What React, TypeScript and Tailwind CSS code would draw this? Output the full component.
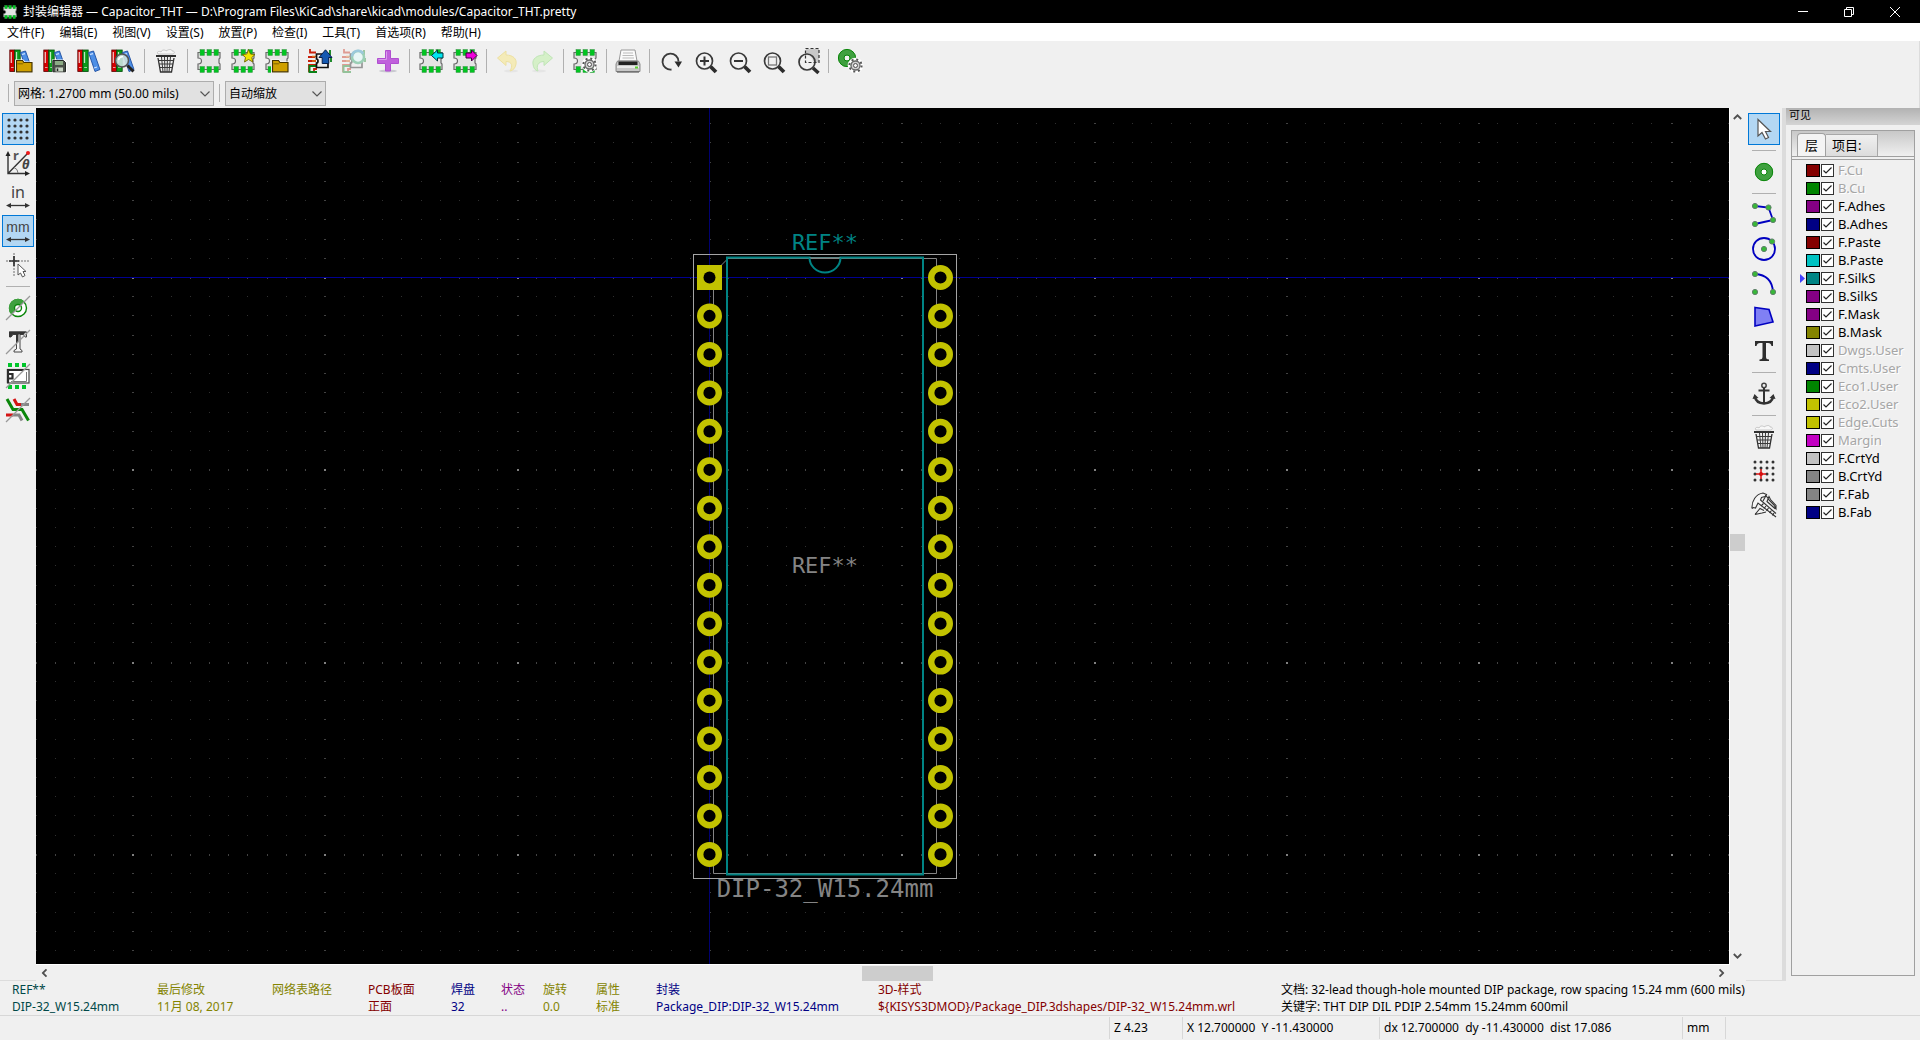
import React from 'react';
import { clsx } from 'clsx';

const MENUS = ['文件(F)', '编辑(E)', '视图(V)', '设置(S)', '放置(P)', '检查(I)', '工具(T)', '首选项(R)', '帮助(H)'];

const LAYERS = [
  { name: 'F.Cu', color: 'bg-[#840000]', disabled: true },
  { name: 'B.Cu', color: 'bg-[#008400]', disabled: true },
  { name: 'F.Adhes', color: 'bg-[#840084]' },
  { name: 'B.Adhes', color: 'bg-[#000084]' },
  { name: 'F.Paste', color: 'bg-[#840000]' },
  { name: 'B.Paste', color: 'bg-[#00c2c2]' },
  { name: 'F.SilkS', color: 'bg-[#008484]', active: true },
  { name: 'B.SilkS', color: 'bg-[#840084]' },
  { name: 'F.Mask', color: 'bg-[#840084]' },
  { name: 'B.Mask', color: 'bg-[#848400]' },
  { name: 'Dwgs.User', color: 'bg-[#c2c2c2]', disabled: true },
  { name: 'Cmts.User', color: 'bg-[#000084]', disabled: true },
  { name: 'Eco1.User', color: 'bg-[#008400]', disabled: true },
  { name: 'Eco2.User', color: 'bg-[#c2c200]', disabled: true },
  { name: 'Edge.Cuts', color: 'bg-[#c2c200]', disabled: true },
  { name: 'Margin', color: 'bg-[#c200c2]', disabled: true },
  { name: 'F.CrtYd', color: 'bg-[#c2c2c2]' },
  { name: 'B.CrtYd', color: 'bg-[#848484]' },
  { name: 'F.Fab', color: 'bg-[#848484]' },
  { name: 'B.Fab', color: 'bg-[#000084]' },
];

const INFO = [
  { label: 'REF**', value: 'DIP-32_W15.24mm', color: 'text-[#004848]' },
  { label: '最后修改', value: '11月 08, 2017', color: 'text-[#848400]' },
  { label: '网络表路径', value: '', color: 'text-[#848400]' },
  { label: 'PCB板面', value: '正面', color: 'text-[#840000]' },
  { label: '焊盘', value: '32', color: 'text-[#000084]' },
  { label: '状态', value: '..', color: 'text-[#840084]' },
  { label: '旋转', value: '0.0', color: 'text-[#848400]' },
  { label: '属性', value: '标准', color: 'text-[#848400]' },
  { label: '封装', value: 'Package_DIP:DIP-32_W15.24mm', color: 'text-[#000084]' },
  { label: '3D-样式', value: '${KISYS3DMOD}/Package_DIP.3dshapes/DIP-32_W15.24mm.wrl', color: 'text-[#840000]' },
  {
    label: '文档: 32-lead though-hole mounted DIP package, row spacing 15.24 mm (600 mils)',
    value: '关键字: THT DIP DIL PDIP 2.54mm 15.24mm 600mil',
    color: 'text-black',
  },
];

type Kids = { children?: React.ReactNode };

function Icon({ children }: Kids) {
  return (
    <svg width="24" height="24" viewBox="0 0 24 24" fill="none" className="overflow-visible" aria-hidden="true">
      {children}
    </svg>
  );
}

/* ---------- shared icon pieces ---------- */

function Chip() {
  return (
    <>
      <path
        d="M1 3.5H23V9L22 10V14L23 15V20.5H1V15C4 15 4.5 13.500 4.500 12S4 9 1 9Z"
        fill="#e4e4e4"
        stroke="#6a6a6a"
        strokeWidth="1.2"
      />
      {[3, 10, 17].map((x) => (
        <g key={x} fill="#00c520" stroke="#3f8f4a" strokeWidth=".5">
          <rect x={x} y=".5" width="4.500" height="6" />
          <rect x={x} y="17.500" width="4.500" height="6" />
        </g>
      ))}
    </>
  );
}

function Books() {
  return (
    <>
      <rect x=".8" y="1" width="4.700" height="21.500" fill="#d40000" stroke="#5a0000" strokeWidth=".8" />
      <rect x="5.800" y="1" width="5.400" height="21.500" fill="#0b9a1a" stroke="#004a08" strokeWidth=".8" />
      <path d="M11.500 3.500L16.500 2L23 20.500L18 22.500Z" fill="#4d8fe6" stroke="#1c4da0" strokeWidth=".9" />
      <path d="M13 5.500L16 4.600M17 19L20 18" stroke="#cfe2ff" strokeWidth="1.200" />
      <path d="M2.300 3V14M7.500 3V14" stroke="#fff" strokeOpacity=".75" strokeWidth="1.300" />
      <path d="M2 18.500H4.500M7.200 18.500H10" stroke="#fff" strokeOpacity=".6" />
    </>
  );
}

function Folder() {
  return (
    <>
      <path d="M6 10.500H14.500L16 12.500H24V24H6Z" fill="#fff" />
      <path d="M7.500 11.500H13.500L15 13.500H23V22.800H7.500Z" fill="#cfa000" stroke="#453400" strokeWidth="1.200" />
      <path d="M8.500 14.800H13.500L14.500 14" stroke="#6a5000" strokeWidth=".8" />
    </>
  );
}

function Gear({ x, y }: { x: number; y: number }) {
  return (
    <g transform={`translate(${x} ${y})`}>
      <circle r="6.300" stroke="#fff" strokeWidth="3" />
      <circle r="6.100" stroke="#555" strokeWidth="2" strokeDasharray="2 2.790" />
      <circle r="4.500" fill="#d0d0d0" stroke="#686868" strokeWidth="1.300" />
      <circle r="2" fill="#f5f5f5" stroke="#505050" />
    </g>
  );
}

function Lens({ children }: Kids) {
  return (
    <Icon>
      <path d="M17.500 17.500L23 23" stroke="#2c2c2c" strokeWidth="3.800" />
      <circle cx="11.500" cy="12" r="8" fill="#f2f2f2" stroke="#3a3a3a" strokeWidth="1.700" />
      {children}
    </Icon>
  );
}

function Trash() {
  return (
    <Icon>
      <path d="M4 5C2 2 6 2 7 3C8 0 12 1 12 2C15 0 18 0 18 2C21 2 21 4 19 5Z" fill="#f8f8f8" stroke="#bdbdbd" strokeWidth=".8" />
      <path d="M2 7H22" stroke="#303030" strokeWidth="2" />
      <path d="M4 9L6.500 23H17.500L20 9" stroke="#303030" strokeWidth="1.300" />
      <path d="M7.500 8L9 23M10.500 8L11 23M13.500 8L13 23M16.500 8L15 23M4.500 11.500H19.500M5 15H19M5.500 18.500H18.500" stroke="#3a3a3a" strokeWidth="1" />
    </Icon>
  );
}

function LoadBoard() {
  return (
    <>
      <path d="M2 0V3.500H8M7 8H0M8 12H0M1 23V16H8M6 23V20H9" stroke="#c8200a" strokeWidth="1.800" />
      <path d="M4 7.500H8M4 12H8" stroke="#d8701a" strokeWidth="1.600" />
      <path d="M1.500 17H8M1.500 16V23H9" stroke="#0a8018" strokeWidth="2" />
      <path d="M8.500 5H20V18.500H8.500V14C10.500 14 10.500 10 8.500 10Z" fill="#eee" stroke="#111" strokeWidth="1.700" />
      <path d="M22 1V6M23 9V13" stroke="#0a8018" strokeWidth="1.800" />
    </>
  );
}

/* ---------- top toolbar icons ---------- */

const openLib = <Icon><Books /><Folder /></Icon>;
const saveLib = (
  <Icon>
    <Books />
    <path d="M9 10.500H21L24 13V24H9Z" fill="#fff" />
    <path d="M9.800 11.500H20.500L22.500 13.500V22.800H9.800Z" fill="#4a5048" stroke="#252825" />
    <path d="M12 12H20V16H12Z" fill="#8cab84" />
    <path d="M12.500 18.500H20V22.500H12.500Z" fill="#c8d4c4" />
    <path d="M14.500 19.500V22" stroke="#222" strokeWidth="1.500" />
  </Icon>
);
const libBrowse = (
  <Icon>
    <Books />
    <path d="M16.500 16.500L22.500 22.500" stroke="#222" strokeWidth="3" />
    <circle cx="11" cy="11.500" r="6.500" fill="#cde2e0" fillOpacity=".9" stroke="#555" strokeWidth="1.600" />
    <path d="M7.500 11C8 8.500 10 7.500 12 7.800" stroke="#fff" strokeWidth="1.500" />
  </Icon>
);
const newFp = (
  <Icon>
    <Chip />
    <path d="M17.500 .5L19.500 5L24 5.500L20.800 8.500L21.800 13L17.500 10.500L13.500 13L14.500 8.500L11.200 5.500L15.800 5Z" fill="#f2e400" stroke="#6b6400" strokeWidth=".9" />
  </Icon>
);
const loadBoard = (
  <Icon>
    <LoadBoard />
    <path d="M17.500 .8L24 8.500H20.800V14.500H14.200V8.500H11Z" fill="#1458b0" stroke="#061f4a" strokeWidth="1" />
  </Icon>
);
const updateBoard = (
  <Icon>
    <g opacity=".4">
      <LoadBoard />
      <circle cx="16" cy="8" r="6" fill="#dff" stroke="#20a060" strokeWidth="2.500" />
      <path d="M10 7.500A6 6 0 0 1 21 4.500" stroke="#2090c0" strokeWidth="2.500" />
    </g>
  </Icon>
);
const plus = (
  <Icon>
    <ellipse cx="12" cy="22" rx="9" ry="1.500" fill="#c9c9d0" />
    <path d="M9.500 1.500H14.500V9.500H22.500V14.500H14.500V22H9.500V14.500H1.500V9.500H9.500Z" fill="#c060dc" stroke="#b04fd0" />
    <path d="M10.500 2.500V10.500H2.500" stroke="#d89aec" />
  </Icon>
);
const importFp = (
  <Icon>
    <Chip />
    <path d="M12.500 6.500L18.500 1V4H24V9H18.500V12Z" fill="#00e5f0" stroke="#00363c" strokeWidth="1" />
  </Icon>
);
const exportFp = (
  <Icon>
    <Chip />
    <path d="M24 6.500L18.500 1V4H13V9H18.500V12Z" fill="#f000dc" stroke="#40003c" strokeWidth="1" />
  </Icon>
);
const undo = (
  <Icon>
    <g opacity=".55">
      <ellipse cx="15" cy="22" rx="7" ry="1.500" fill="#ddd" />
      <path d="M1.500 9L10 2V6C17 6 21 10 20 15C19.500 19 17 21.500 14 22C17 17 16 12.500 10 12.500V16.500Z" fill="#f8e88c" stroke="#ecd460" />
    </g>
  </Icon>
);
const redo = (
  <Icon>
    <g opacity=".55">
      <ellipse cx="9" cy="22" rx="7" ry="1.500" fill="#ddd" />
      <path d="M22.500 9L14 2V6C7 6 2 10 3 15C3.500 19 5 21.500 8 22C6 17 8 12.500 14 12.500V16.500Z" fill="#c0f0a8" stroke="#98dc88" />
    </g>
  </Icon>
);
const printer = (
  <Icon>
    <path d="M5 1H19L21 12H3Z" fill="#fafafa" stroke="#999" />
    <path d="M7 4H17M6.500 6.500H17.500M6.500 9H18" stroke="#bbb" />
    <path d="M1.500 12H22.500L24 15V22.500H0V15Z" fill="#c8c8c8" stroke="#777" strokeWidth=".8" />
    <path d="M2.500 12.500H21.500V16H2.500Z" fill="#222" />
    <path d="M1 18H23" stroke="#f6f6f6" strokeWidth="1.500" />
    <rect x="19" y="17.500" width="3" height="2" fill="#5ad030" />
    <path d="M1 23H23" stroke="#666" strokeWidth="1.300" />
  </Icon>
);
const redraw = (
  <Icon>
    <path d="M12.500 20.500A8 8 0 1 1 19.500 12.500" stroke="#3a3a3a" strokeWidth="1.800" />
    <path d="M15.500 12.500H23L19.500 18.500Z" fill="#2b2b2b" />
  </Icon>
);
const zoomArea = (
  <Icon>
    <path d="M11 0H24V13.500H18Q17 7 11 6Z" fill="#c8c8c8" />
    <path d="M18 19L23.500 24" stroke="#2c2c2c" strokeWidth="3.500" />
    <circle cx="12" cy="13" r="8" fill="#f2f2f2" fillOpacity=".6" stroke="#3a3a3a" strokeWidth="1.700" />
    <rect x="10.500" y="-.5" width="13.500" height="14" stroke="#333" strokeWidth="1.200" strokeDasharray="3 2" />
  </Icon>
);
const padProps = (
  <Icon>
    <circle cx="9" cy="9" r="5.800" stroke="#3fa03f" strokeWidth="6" />
    <circle cx="9" cy="9" r="8.600" stroke="#0a860a" />
    <circle cx="9" cy="9" r="3" stroke="#0a860a" />
    <Gear x={17.5} y={16.5} />
  </Icon>
);

const TOP_GROUPS = [
  [
    { label: 'Set active library', icon: openLib },
    { label: 'Save library', icon: saveLib },
    { label: 'Library', icon: <Icon><Books /></Icon> },
    { label: 'Browse library', icon: libBrowse },
  ],
  [{ label: 'Delete part', icon: <Trash /> }],
  [
    { label: 'New footprint', icon: <Icon><Chip /></Icon> },
    { label: 'New footprint wizard', icon: newFp },
    { label: 'Open footprint', icon: <Icon><Chip /><Folder /></Icon> },
  ],
  [
    { label: 'Load from board', icon: loadBoard },
    { label: 'Update on board', icon: updateBoard },
    { label: 'Insert into board', icon: plus },
  ],
  [
    { label: 'Import footprint', icon: importFp },
    { label: 'Export footprint', icon: exportFp },
  ],
  [
    { label: 'Undo', icon: undo },
    { label: 'Redo', icon: redo },
  ],
  [{ label: 'Footprint properties', icon: <Icon><Chip /><Gear x={16.5} y={15.5} /></Icon> }],
  [{ label: 'Print', icon: printer }],
  [
    { label: 'Redraw', icon: redraw },
    { label: 'Zoom in', icon: <Lens><path d="M7 12H16M11.500 7.500V16.500" stroke="#333" strokeWidth="2" /></Lens> },
    { label: 'Zoom out', icon: <Lens><path d="M7 12H16" stroke="#333" strokeWidth="2" /></Lens> },
    { label: 'Zoom to fit', icon: <Lens><rect x="7.500" y="8" width="8" height="8" stroke="#777" strokeWidth="1.300" /></Lens> },
    { label: 'Zoom to selection', icon: zoomArea },
  ],
  [{ label: 'Pad properties', icon: padProps }],
];

/* ---------- side toolbar icons ---------- */

const DOTS = [3, 9, 15, 21];

const gridDots = (
  <Icon>
    {DOTS.map((y) => DOTS.map((x) => <circle key={`${x}-${y}`} cx={x} cy={y} r="1.600" fill="#333" />))}
  </Icon>
);
const slash = <path d="M0 24L24 0" stroke="#999" strokeWidth="1.200" />;
const measureArrow = (
  <>
    <path d="M3 20.500H21" stroke="#333" strokeWidth="1.300" />
    <path d="M0 20.500L5 18V23ZM24 20.500L19 18V23Z" fill="#333" />
  </>
);
const polar = (
  <Icon>
    <path d="M2 4V22.500H20M2 22.500L22 2" stroke="#333" strokeWidth="1.400" />
    <path d="M2 0L4.500 5H-.5ZM24 22.500L19 20V25Z" fill="#222" />
    <path d="M8 16.500Q12 18 12 22" stroke="#777" />
    <circle cx="22" cy="2" r="2" fill="#f01818" />
    <text x="7" y="9" fontSize="13" fontWeight="bold" fill="#555">r</text>
    <text x="16" y="18" fontSize="13" fontWeight="bold" fontStyle="italic" fill="#444">θ</text>
  </Icon>
);
const inches = (
  <Icon>
    <text x="12" y="13" fontSize="16" textAnchor="middle" fill="#444">in</text>
    {measureArrow}
  </Icon>
);
const millimetres = (
  <Icon>
    <text x="12" y="13" fontSize="14" fontFamily="'Liberation Sans', sans-serif" textAnchor="middle" fill="#444">mm</text>
    {measureArrow}
  </Icon>
);
const cursorShape = (
  <Icon>
    <path d="M8 0V24M0 8H24" stroke="#999" strokeWidth="1.500" strokeDasharray="2 1" />
    <path d="M8 3V13M3 8H13" stroke="#333" strokeWidth="1.700" />
    <path d="M12 11L20 18.500H17L19 22.500L16.500 24L14.500 20L12 22Z" fill="#fff" stroke="#555" />
  </Icon>
);
const padSketch = (
  <Icon>
    <circle cx="12" cy="12" r="8.500" fill="#fff" stroke="#0a860a" strokeWidth="1.400" />
    <path d="M5.500 18.500A9 9 0 0 1 18.500 5.500L14.500 9.500A3.500 3.500 0 0 0 9.500 14.500Z" fill="#3fa03f" />
    <circle cx="12" cy="12" r="3.500" fill="#fff" stroke="#0a860a" strokeWidth="1.400" />
    {slash}
  </Icon>
);
const textSketch = (
  <Icon>
    <path d="M3.500 7V2H20.500V7H19L17.500 4.500H14V19L16 20.500V22H8V20.500L10.500 19V4.500H7L5 7Z" fill="#f5f5f5" stroke="#444" strokeWidth="1" />
    <path d="M3 7V1.500H20.500L17.500 4.500H12.500V11L10 13.500V4.500H7L5 7Z" fill="#333" />
    {slash}
  </Icon>
);
const outlineSketch = (
  <Icon>
    {[2, 9, 16].map((x) => (
      <g key={x} fill="#00c52a">
        <rect x={x} y="-1" width="4" height="4" />
        <rect x={x} y="21" width="4" height="4" />
      </g>
    ))}
    <rect x="1.500" y="5.500" width="21.500" height="13.500" fill="#fff" stroke="#444" strokeWidth="1.200" />
    <path d="M18 6H2V19M2 10H6.500V14.500H2" stroke="#2c2c2c" strokeWidth="2.200" />
    <path d="M5 17.500H20.500V8" stroke="#777" />
    {slash}
  </Icon>
);
const trackSketch = (
  <Icon>
    <path d="M8 1L11 6.500H15" stroke="#d41414" strokeWidth="3" />
    <path d="M15 6.500H23" stroke="#858585" strokeWidth="3" />
    <path d="M1 1L7 11.500H16L22.500 22.500" stroke="#0a860a" strokeWidth="3" />
    <path d="M0 17H7" stroke="#d41414" strokeWidth="3" />
    <path d="M7 17H13L16 22.500" stroke="#858585" strokeWidth="3" />
    {slash}
  </Icon>
);

const LEFT_GROUPS = [
  [
    { label: 'Show grid', icon: gridDots, pressed: true },
    { label: 'Polar coordinates', icon: polar },
    { label: 'Units in inches', icon: inches },
    { label: 'Units in millimetres', icon: millimetres, pressed: true },
    { label: 'Cursor shape', icon: cursorShape },
  ],
  [
    { label: 'Sketch pads', icon: padSketch },
    { label: 'Sketch text', icon: textSketch },
    { label: 'Sketch outlines', icon: outlineSketch },
    { label: 'High contrast', icon: trackSketch },
  ],
];

function Node({ x, y }: { x: number; y: number }) {
  return <circle cx={x} cy={y} r="2.600" fill="#38b838" stroke="#5f7f6a" strokeWidth="1" />;
}

const arrow = (
  <Icon>
    <path d="M6 2.500V19L10 15.500L13.500 22L16.500 20.500L13.500 14.500H18.500Z" fill="#fff" stroke="#555" strokeWidth="1.200" />
  </Icon>
);
const pad = (
  <Icon>
    <circle cx="12" cy="12" r="6" stroke="#3fa03f" strokeWidth="6" />
    <circle cx="12" cy="12" r="8.700" stroke="#0a860a" />
    <circle cx="12" cy="12" r="3" fill="#fff" stroke="#0a860a" />
  </Icon>
);
const polyline = (
  <Icon>
    <path d="M3 3L16.500 4.500L21 17L3 21" stroke="#0000c0" strokeWidth="1.800" />
    <Node x={3} y={3} /><Node x={16.5} y={4.5} /><Node x={21} y={17} /><Node x={3} y={21} />
  </Icon>
);
const circle = (
  <Icon>
    <circle cx="12" cy="12" r="11" stroke="#0000c0" strokeWidth="1.800" />
    <Node x={12} y={12} /><Node x={20} y={4.5} />
  </Icon>
);
const arc = (
  <Icon>
    <path d="M3 3Q20 4 21 21" stroke="#0000c0" strokeWidth="1.800" />
    <Node x={3} y={3} /><Node x={3} y={21} /><Node x={21} y={21} />
  </Icon>
);
const polygon = (
  <Icon>
    <path d="M3 2.500L17 4.500L21 17L3 21Z" fill="#8080f4" stroke="#0000c0" strokeWidth="1.600" />
  </Icon>
);
const letterT = (
  <Icon>
    <path d="M3 2H21V7H19.500Q19 4 16 4H14V18Q14 20.500 17 20.500V22H7.500V20.500Q10.500 20.500 10.500 18V4H8Q5 4 4.500 7H3Z" fill="#2d2d2d" />
  </Icon>
);
const anchor = (
  <Icon>
    <circle cx="12" cy="3.500" r="2.200" stroke="#444" strokeWidth="1.500" />
    <path d="M12 6V21M6.500 8.500H17.500" stroke="#333" strokeWidth="2" />
    <path d="M3 15Q4 21 12 21.500Q20 21 21 15" stroke="#333" strokeWidth="2.500" />
    <path d="M.5 17L2.500 12L6.500 16ZM23.500 17L21.500 12L17.500 16Z" fill="#333" />
  </Icon>
);
const gridOrigin = (
  <Icon>
    {DOTS.map((y) => DOTS.map((x) => <circle key={`${x}-${y}`} cx={x} cy={y} r="1.500" fill="#333" />))}
    <path d="M9 10V20M4 15H14" stroke="#d81010" strokeWidth="1.500" />
    <circle cx="9" cy="15" r="2" fill="#d81010" />
  </Icon>
);
const caliper = (
  <Icon>
    <path
      d="M0 15.500C-.5 8 4 1 11 0L14.500 1.500L13 3.500L9.500 4.500L8.500 7L24 20.500M24 24L6 10L3.500 15L1.500 14.500L0 15.500M3 21.500L8 15.500L12 17.500M3 21.500L10 20L14 19"
      fill="#f6f6f6"
      stroke="#333"
      strokeWidth="1.100"
    />
    <path
      d="M11 8L14 2.500L17 7L22 12L24 15.500V12.500L18.500 6.500L17 3.500L15 8.500L23.500 16M9 13L11.500 10.500M12 15.500L14 13M14.500 18L16.500 15M17.500 20L19.500 17.500M20.500 22.500L22 20"
      stroke="#333"
      strokeWidth="1.100"
    />
  </Icon>
);

const RIGHT_GROUPS = [
  [{ label: 'Select', icon: arrow, pressed: true }],
  [{ label: 'Add pad', icon: pad }],
  [
    { label: 'Add line', icon: polyline },
    { label: 'Add circle', icon: circle },
    { label: 'Add arc', icon: arc },
    { label: 'Add polygon', icon: polygon },
    { label: 'Add text', icon: letterT },
  ],
  [{ label: 'Place anchor', icon: anchor }],
  [
    { label: 'Delete', icon: <Trash /> },
    { label: 'Grid origin', icon: gridOrigin },
    { label: 'Measure', icon: caliper },
  ],
];

type Tool = { label: string; icon: React.ReactNode; pressed?: boolean };

function SideBar({ groups, name }: { groups: Tool[][]; name: string }) {
  return (
    <div role="toolbar" aria-label={name} className="flex w-9 shrink-0 flex-col items-center border-b border-[#dcdcdc] pt-1">
      {groups.map((group, i) => (
        <React.Fragment key={i}>
          {i > 0 && <div className="my-1 h-px w-6 bg-[#b0b0b0]" />}
          {group.map((tool) => (
            <button
              key={tool.label}
              aria-label={tool.label}
              aria-pressed={!!tool.pressed}
              className={clsx(
                'my-px grid size-8 place-items-center',
                tool.pressed && 'border border-[#0078d7] bg-[#b3d7f3]'
              )}
            >
              {tool.icon}
            </button>
          ))}
        </React.Fragment>
      ))}
    </div>
  );
}

function TitleBar() {
  return (
    <header className="flex h-[23px] items-center bg-black pr-0.5 text-white">
      <svg width="14" height="14" viewBox="0 0 24 24" fill="none" className="ml-[3px]" aria-hidden="true">
        <Chip />
      </svg>
      <h1 className="ml-1.5 flex-1 whitespace-pre">
        封装编辑器 — Capacitor_THT — D:\Program Files\KiCad\share\kicad\modules/Capacitor_THT.pretty
      </h1>
      <button aria-label="Minimize" className="grid h-full w-[46px] place-items-center">
        <svg width="10" height="10" aria-hidden="true"><path d="M0 4.500H10" stroke="#fff" /></svg>
      </button>
      <button aria-label="Restore" className="grid h-full w-[46px] place-items-center">
        <svg width="10" height="10" fill="none" aria-hidden="true">
          <path d="M.5 2.500H7.500V9.500H.5ZM2.500 2.500V.5H9.500V7.500H7.500" stroke="#fff" />
        </svg>
      </button>
      <button aria-label="Close" className="grid h-full w-[46px] place-items-center">
        <svg width="10" height="10" aria-hidden="true"><path d="M0 0L10 10M10 0L0 10" stroke="#fff" /></svg>
      </button>
    </header>
  );
}

function Combo({ label, value, width }: { label: string; value: string; width: string }) {
  return (
    <div className={clsx('relative h-[25px]', width)}>
      <select
        aria-label={label}
        className="h-full w-full appearance-none border border-[#adadad] bg-[#e1e1e1] pl-[3px] outline-none"
      >
        <option>{value}</option>
      </select>
      <svg width="10" height="6" fill="none" className="pointer-events-none absolute top-[10px] right-1" aria-hidden="true">
        <path d="M.5 .5L5 5L9.500 .5" stroke="#555" strokeWidth="1.200" />
      </svg>
    </div>
  );
}

const PITCH = 19.23;
const ORIGIN_X = 673;
const ORIGIN_Y = 169;

function gridPath(kind: 'minor' | 'major' | 'cross') {
  let d = '';
  for (let i = -35; i <= 90; i++) {
    for (let j = -8; j <= 60; j++) {
      const mx = i % 10 === 0;
      const my = j % 10 === 0;
      const k = mx && my ? 'cross' : mx || my ? 'major' : 'minor';
      if (k !== kind) continue;
      const x = Math.round(ORIGIN_X + i * PITCH);
      const y = Math.round(ORIGIN_Y + j * PITCH);
      const w = mx ? 2 : 1;
      const h = my ? 2 : 1;
      d += `M${x} ${y}h${w}v${h}h-${w}z`;
    }
  }
  return d;
}

const GRID_MINOR = gridPath('minor');
const GRID_MAJOR = gridPath('major');
const GRID_CROSS = gridPath('cross');

function Footprint() {
  const rows = Array.from({ length: 16 }, (_, i) => 169.5 + i * PITCH * 2);
  return (
    <svg className="block h-full w-full" fill="none" aria-label="DIP-32_W15.24mm">
      <path d={GRID_MINOR} fill="#303030" />
      <path d={GRID_MAJOR} fill="#424242" />
      <path d={GRID_CROSS} fill="#808080" />
      <rect x="0" y={ORIGIN_Y} width="100%" height="1" fill="#000090" />
      <rect x={ORIGIN_X} y="0" width="1" height="100%" fill="#000070" />

      <rect x="657.5" y="146.5" width="263" height="624" stroke="#a4a4a4" />
      <path d="M692 150.5H900.5V765.5H677.5V165Z" stroke="#848484" />
      <path d="M691 149.5H773.500A15.500 15 0 0 0 804.500 149.500H887V766.500H691Z" stroke="#008484" strokeWidth="2" />
      <path d="M773.500 149.500H804.500" stroke="#5a8484" />

      {rows.map((y, i) => (
        <g key={y}>
          {i === 0 ? (
            <>
              <rect x="661" y="157" width="25" height="25" fill="#c2c200" />
              <circle cx="673.5" cy={y} r="6" fill="#000" />
            </>
          ) : (
            <circle cx="673.5" cy={y} r="9.300" fill="#000" stroke="#c2c200" strokeWidth="6.400" />
          )}
          <circle cx="904.5" cy={y} r="9.300" fill="#000" stroke="#c2c200" strokeWidth="6.400" />
        </g>
      ))}

      <g fontFamily="'DejaVu Sans Mono', monospace" textAnchor="middle">
        <text x="789" y="142" fontSize="22" fill="#008484">REF**</text>
        <text x="789" y="465" fontSize="22" fill="#848484">REF**</text>
        <text x="789" y="789" fontSize="24" fill="#848484">DIP-32_W15.24mm</text>
      </g>
    </svg>
  );
}

function Chevron({ turn }: { turn: string }) {
  return (
    <svg width="9" height="6" viewBox="0 0 9 6" fill="none" className={turn} aria-hidden="true">
      <path d="M.8 5L4.500 1.300L8.200 5" stroke="#505050" strokeWidth="1.800" />
    </svg>
  );
}

function CanvasArea() {
  return (
    <main className="grid min-w-0 flex-1 grid-cols-[minmax(0,1fr)_16px] grid-rows-[minmax(0,1fr)_16px]">
      <div className="min-h-0 overflow-hidden border-r border-b border-white bg-black">
        <Footprint />
      </div>
      <div className="flex flex-col items-center justify-between py-1.5 pr-px">
        <Chevron turn="" />
        <div className="mt-3 h-[17px] w-[15px] bg-[#cdcdcd]" />
        <Chevron turn="rotate-180" />
      </div>
      <div className="flex items-center justify-between px-1">
        <Chevron turn="-rotate-90" />
        <div className="ml-7 h-[15px] w-[71px] bg-[#cdcdcd]" />
        <Chevron turn="rotate-90" />
      </div>
    </main>
  );
}

function LayerPanel() {
  return (
    <aside className="flex w-[134px] shrink-0 flex-col">
      <div className="h-[17px] bg-linear-to-b from-[#b2b2b2] to-[#d4d4d4] pl-[3px] text-[11px] leading-[14px]">可见</div>
      <div className="m-[5px] flex-1 border border-[#a0a0a0]">
        <div
          role="tablist"
          className="flex h-[26px] items-end border-b border-[#a0a0a0] bg-linear-to-b from-[#c8c8c8] to-[#f0f0f0] pl-[5px] text-[13px]"
        >
          <button
            role="tab"
            aria-selected="true"
            className="h-[23px] w-[29px] rounded-t-sm border border-b-0 border-[#a0a0a0] bg-[#f4f4f4]"
          >
            层
          </button>
          <button
            role="tab"
            aria-selected="false"
            className="h-[22px] w-[52px] border border-b-0 border-l-0 border-[#a8a8a8] bg-linear-to-b from-[#f0f0f0] to-[#dcdcdc] pl-1.5 text-left"
          >
            项目:
          </button>
        </div>
        <div className="mt-0.5 border-t border-[#a0a0a0] pt-px">
          {LAYERS.map((layer) => (
            <label key={layer.name} className="flex h-[18px] items-center pl-2">
              <svg width="6" height="9" aria-hidden="true">
                {layer.active && <path d="M0 0L5 4.500L0 9Z" fill="#4040ff" />}
              </svg>
              <span className={clsx('h-[13px] w-[14px] border border-black', layer.color)} />
              <span className="ml-px grid">
                <input
                  type="checkbox"
                  defaultChecked
                  className="size-[13px] appearance-none border border-[#333] bg-white [grid-area:1/1]"
                />
                <svg width="13" height="13" fill="none" className="pointer-events-none [grid-area:1/1]" aria-hidden="true">
                  <path d="M2.500 6.500L5 9L10.500 3.500" stroke="#222" strokeWidth="1.200" />
                </svg>
              </span>
              <span
                className={clsx(
                  'ml-1 text-[13px]',
                  layer.disabled && 'text-[#a6a6a6] [text-shadow:1px_1px_0_#fff]'
                )}
              >
                {layer.name}
              </span>
            </label>
          ))}
        </div>
      </div>
    </aside>
  );
}

export default function App() {
  return (
    <div className="flex h-screen flex-col overflow-hidden bg-[#f0f0f0] font-['Noto_Sans','Noto_Sans_CJK_SC',sans-serif] text-[12px] leading-[17px] text-black">
      <TitleBar />
      <nav className="flex h-[18px] items-center gap-px bg-white">
        {MENUS.map((menu) => (
          <button key={menu} className="px-[7px] whitespace-nowrap">
            {menu}
          </button>
        ))}
      </nav>

      <div className="border-r border-[#dcdcdc]">
        <div role="toolbar" aria-label="Main" className="flex h-10 items-center pl-1">
          {TOP_GROUPS.map((group, i) => (
            <React.Fragment key={i}>
              {i > 0 && <div className="mx-1 h-6 w-px bg-[#b0b0b0]" />}
              {group.map((tool) => (
                <button key={tool.label} aria-label={tool.label} className="grid h-8 w-[34px] place-items-center">
                  {tool.icon}
                </button>
              ))}
            </React.Fragment>
          ))}
        </div>
        <div className="flex h-[27px] items-start pl-2">
          <div className="mt-[3px] mr-[5px] h-[18px] w-px bg-[#b0b0b0]" />
          <Combo label="Grid" value="网格: 1.2700 mm (50.00 mils)" width="w-[200px]" />
          <div className="mx-[5px] mt-[3px] h-[18px] w-px bg-[#b0b0b0]" />
          <Combo label="Zoom" value="自动缩放" width="w-[101px]" />
        </div>
      </div>

      <div className="flex min-h-0 flex-1">
        <SideBar groups={LEFT_GROUPS} name="Display options" />
        <CanvasArea />
        <SideBar groups={RIGHT_GROUPS} name="Drawing tools" />
        <div className="w-1 shrink-0 bg-[#dcdcdc]" />
        <LayerPanel />
      </div>

      <dl className="grid h-[35px] shrink-0 grid-cols-[145px_115px_96px_83px_50px_42px_53px_60px_222px_403px_1fr] border-b border-[#d7d7d7] pl-3">
        {INFO.map((item) => (
          <div key={item.label} className={clsx('whitespace-nowrap', item.color)}>
            <dt>{item.label}</dt>
            <dd>{item.value}</dd>
          </div>
        ))}
      </dl>

      <footer className="flex h-6 shrink-0 items-stretch py-px leading-[22px] whitespace-pre">
        <div className="flex-1" />
        <div className="w-[73px] border-l border-[#d7d7d7] pl-1">Z 4.23</div>
        <div className="w-[197px] border-l border-[#d7d7d7] pl-1">X 12.700000  Y -11.430000</div>
        <div className="w-[303px] border-l border-[#d7d7d7] pl-1">dx 12.700000  dy -11.430000  dist 17.086</div>
        <div className="w-[43px] border-l border-[#d7d7d7] pl-1">mm</div>
        <div className="w-[195px] border-l border-[#d7d7d7]" />
      </footer>
    </div>
  );
}
